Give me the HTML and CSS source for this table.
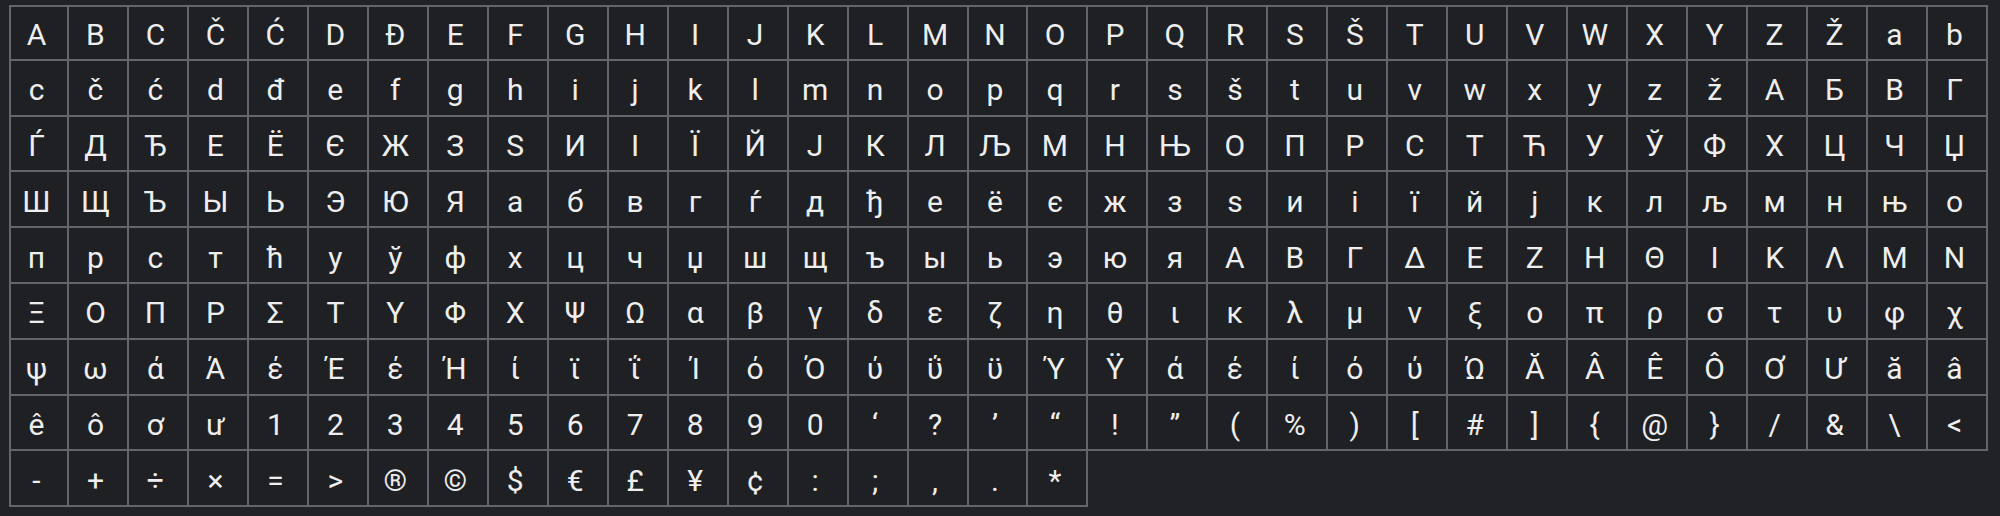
FILE: index.html
```html
<!DOCTYPE html>
<html lang="en">
<head>
<meta charset="utf-8">
<title>Character grid</title>
<link rel="stylesheet" href="styles.css">
</head>
<body>
<main class="page">
<div class="grid">
<div class="c">A</div><div class="c">B</div><div class="c">C</div><div class="c">Č</div><div class="c">Ć</div><div class="c">D</div><div class="c">Đ</div><div class="c">E</div><div class="c">F</div><div class="c">G</div><div class="c">H</div><div class="c">I</div><div class="c">J</div><div class="c">K</div><div class="c">L</div><div class="c">M</div><div class="c">N</div><div class="c">O</div><div class="c">P</div><div class="c">Q</div><div class="c">R</div><div class="c">S</div><div class="c">Š</div><div class="c">T</div><div class="c">U</div><div class="c">V</div><div class="c">W</div><div class="c">X</div><div class="c">Y</div><div class="c">Z</div><div class="c">Ž</div><div class="c">a</div><div class="c">b</div>
<div class="c">c</div><div class="c">č</div><div class="c">ć</div><div class="c">d</div><div class="c">đ</div><div class="c">e</div><div class="c">f</div><div class="c">g</div><div class="c">h</div><div class="c">i</div><div class="c">j</div><div class="c">k</div><div class="c">l</div><div class="c">m</div><div class="c">n</div><div class="c">o</div><div class="c">p</div><div class="c">q</div><div class="c">r</div><div class="c">s</div><div class="c">š</div><div class="c">t</div><div class="c">u</div><div class="c">v</div><div class="c">w</div><div class="c">x</div><div class="c">y</div><div class="c">z</div><div class="c">ž</div><div class="c">А</div><div class="c">Б</div><div class="c">В</div><div class="c">Г</div>
<div class="c">Ѓ</div><div class="c">Д</div><div class="c">Ђ</div><div class="c">Е</div><div class="c">Ё</div><div class="c">Є</div><div class="c">Ж</div><div class="c">З</div><div class="c">Ѕ</div><div class="c">И</div><div class="c">І</div><div class="c">Ї</div><div class="c">Й</div><div class="c">Ј</div><div class="c">К</div><div class="c">Л</div><div class="c">Љ</div><div class="c">М</div><div class="c">Н</div><div class="c">Њ</div><div class="c">О</div><div class="c">П</div><div class="c">Р</div><div class="c">С</div><div class="c">Т</div><div class="c">Ћ</div><div class="c">У</div><div class="c">Ў</div><div class="c">Ф</div><div class="c">Х</div><div class="c">Ц</div><div class="c">Ч</div><div class="c">Џ</div>
<div class="c">Ш</div><div class="c">Щ</div><div class="c">Ъ</div><div class="c">Ы</div><div class="c">Ь</div><div class="c">Э</div><div class="c">Ю</div><div class="c">Я</div><div class="c">а</div><div class="c">б</div><div class="c">в</div><div class="c">г</div><div class="c">ѓ</div><div class="c">д</div><div class="c">ђ</div><div class="c">е</div><div class="c">ё</div><div class="c">є</div><div class="c">ж</div><div class="c">з</div><div class="c">ѕ</div><div class="c">и</div><div class="c">і</div><div class="c">ї</div><div class="c">й</div><div class="c">ј</div><div class="c">к</div><div class="c">л</div><div class="c">љ</div><div class="c">м</div><div class="c">н</div><div class="c">њ</div><div class="c">о</div>
<div class="c">п</div><div class="c">р</div><div class="c">с</div><div class="c">т</div><div class="c">ћ</div><div class="c">у</div><div class="c">ў</div><div class="c">ф</div><div class="c">х</div><div class="c">ц</div><div class="c">ч</div><div class="c">џ</div><div class="c">ш</div><div class="c">щ</div><div class="c">ъ</div><div class="c">ы</div><div class="c">ь</div><div class="c">э</div><div class="c">ю</div><div class="c">я</div><div class="c">Α</div><div class="c">Β</div><div class="c">Γ</div><div class="c">Δ</div><div class="c">Ε</div><div class="c">Ζ</div><div class="c">Η</div><div class="c">Θ</div><div class="c">Ι</div><div class="c">Κ</div><div class="c">Λ</div><div class="c">Μ</div><div class="c">Ν</div>
<div class="c">Ξ</div><div class="c">Ο</div><div class="c">Π</div><div class="c">Ρ</div><div class="c">Σ</div><div class="c">Τ</div><div class="c">Υ</div><div class="c">Φ</div><div class="c">Χ</div><div class="c">Ψ</div><div class="c">Ω</div><div class="c">α</div><div class="c">β</div><div class="c">γ</div><div class="c">δ</div><div class="c">ε</div><div class="c">ζ</div><div class="c">η</div><div class="c">θ</div><div class="c">ι</div><div class="c">κ</div><div class="c">λ</div><div class="c">μ</div><div class="c">ν</div><div class="c">ξ</div><div class="c">ο</div><div class="c">π</div><div class="c">ρ</div><div class="c">σ</div><div class="c">τ</div><div class="c">υ</div><div class="c">φ</div><div class="c">χ</div>
<div class="c">ψ</div><div class="c">ω</div><div class="c">ά</div><div class="c">Ά</div><div class="c">έ</div><div class="c">Έ</div><div class="c">έ</div><div class="c">Ή</div><div class="c">ί</div><div class="c">ϊ</div><div class="c">ΐ</div><div class="c">Ί</div><div class="c">ό</div><div class="c">Ό</div><div class="c">ύ</div><div class="c">ΰ</div><div class="c">ϋ</div><div class="c">Ύ</div><div class="c">Ϋ</div><div class="c">ά</div><div class="c">έ</div><div class="c">ί</div><div class="c">ό</div><div class="c">ύ</div><div class="c">Ώ</div><div class="c">Ă</div><div class="c">Â</div><div class="c">Ê</div><div class="c">Ô</div><div class="c">Ơ</div><div class="c">Ư</div><div class="c">ă</div><div class="c">â</div>
<div class="c">ê</div><div class="c">ô</div><div class="c">ơ</div><div class="c">ư</div><div class="c">1</div><div class="c">2</div><div class="c">3</div><div class="c">4</div><div class="c">5</div><div class="c">6</div><div class="c">7</div><div class="c">8</div><div class="c">9</div><div class="c">0</div><div class="c">‘</div><div class="c">?</div><div class="c">’</div><div class="c">“</div><div class="c">!</div><div class="c">”</div><div class="c">(</div><div class="c">%</div><div class="c">)</div><div class="c">[</div><div class="c">#</div><div class="c">]</div><div class="c">{</div><div class="c">@</div><div class="c">}</div><div class="c">/</div><div class="c">&amp;</div><div class="c">\</div><div class="c">&lt;</div>
<div class="c">-</div><div class="c">+</div><div class="c">÷</div><div class="c">×</div><div class="c">=</div><div class="c">&gt;</div><div class="c">®</div><div class="c">©</div><div class="c">$</div><div class="c">€</div><div class="c">£</div><div class="c">¥</div><div class="c">¢</div><div class="c">:</div><div class="c">;</div><div class="c">,</div><div class="c">.</div><div class="c">*</div>
</div>
</main>
</body>
</html>
```

FILE: styles.css
```css
html, body {
  margin: 0;
  padding: 0;
  background: #212226;
}

.page {
  padding: 5px 10px 0 9px;
  font-family: Roboto, "Noto Sans", "DejaVu Sans", sans-serif;
}

.grid {
  width: 1979px;
  display: grid;
  grid-template-columns: repeat(33, 1fr);
  grid-auto-rows: 55.8px;
}

.c {
  box-sizing: border-box;
  display: flex;
  align-items: center;
  justify-content: center;
  padding: 5px 5px 0 0;
  background: #1f2023;
  color: #eeeeee;
  font-size: 30px;
  font-weight: 400;
  line-height: 1;
  border-right: 2px solid #646569;
  border-bottom: 2px solid #646569;
}

.c:nth-child(33n+1) {
  border-left: 2px solid #646569;
}

.c:nth-child(-n+33) {
  border-top: 2px solid #646569;
}
```
